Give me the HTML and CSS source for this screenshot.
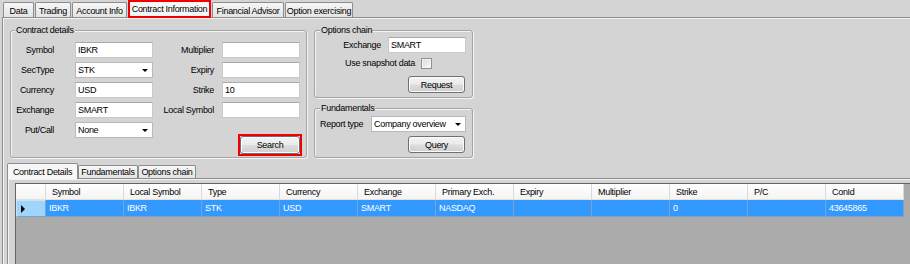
FILE: index.html
```html
<!DOCTYPE html>
<html>
<head>
<meta charset="utf-8">
<title>Contract Information</title>
<link rel="stylesheet" href="styles.css">
</head>
<body>
<div class="window">
  <div class="tabstrip">
    <div class="tab w-data">Data</div>
    <div class="tab w-trading">Trading</div>
    <div class="tab w-account">Account Info</div>
    <div class="tab active marked w-contract">Contract Information</div>
    <div class="tab w-fa">Financial Advisor</div>
    <div class="tab w-opt">Option exercising</div>
  </div>
  <div class="panel">
    <div class="top">
      <fieldset class="group details">
        <legend class="lg-details">Contract details</legend>
        <div class="form">
          <span class="lbl">Symbol</span><div class="input">IBKR</div>
          <span class="lbl lbl2">Multiplier</span><div class="input"></div>

          <span class="lbl">SecType</span><div class="input select">STK<span class="arrow"></span></div>
          <span class="lbl lbl2">Expiry</span><div class="input"></div>

          <span class="lbl">Currency</span><div class="input">USD</div>
          <span class="lbl lbl2">Strike</span><div class="input">10</div>

          <span class="lbl">Exchange</span><div class="input">SMART</div>
          <span class="lbl lbl2">Local Symbol</span><div class="input"></div>

          <span class="lbl">Put/Call</span><div class="input select">None<span class="arrow"></span></div>

          <div class="hilite"><div class="btn search">Search</div></div>
        </div>
      </fieldset>
      <div class="rightcol">
        <fieldset class="group side">
          <legend class="lg-side">Options chain</legend>
          <div class="row r-exch">
            <span class="rlbl">Exchange</span>
            <div class="input oc-input">SMART</div>
          </div>
          <div class="row r-snap">
            <span class="rlbl">Use snapshot data</span>
            <span class="checkbox"></span>
          </div>
          <div class="row r-btn">
            <div class="btn sbtn">Request</div>
          </div>
        </fieldset>
        <fieldset class="group side fund">
          <legend class="lg-side">Fundamentals</legend>
          <div class="row r-report">
            <span class="rlbl report-lbl">Report type</span>
            <div class="input select report-sel">Company overview<span class="arrow"></span></div>
          </div>
          <div class="row r-query">
            <div class="btn sbtn">Query</div>
          </div>
        </fieldset>
      </div>
    </div>

    <div class="lower">
      <div class="subtabs">
        <div class="subtab active w-cd">Contract Details</div>
        <div class="subtab w-fund">Fundamentals</div>
        <div class="subtab w-oc">Options chain</div>
      </div>
      <div class="subpanel">
        <div class="gridview">
          <div class="grow head">
            <div class="hcell corner"></div>
            <div class="hcell">Symbol</div>
            <div class="hcell">Local Symbol</div>
            <div class="hcell">Type</div>
            <div class="hcell">Currency</div>
            <div class="hcell">Exchange</div>
            <div class="hcell">Primary Exch.</div>
            <div class="hcell">Expiry</div>
            <div class="hcell">Multiplier</div>
            <div class="hcell">Strike</div>
            <div class="hcell">P/C</div>
            <div class="hcell">ConId</div>
          </div>
          <div class="grow data">
            <div class="rowhead"><span class="pointer"></span></div>
            <div class="dcell">IBKR</div>
            <div class="dcell">IBKR</div>
            <div class="dcell">STK</div>
            <div class="dcell">USD</div>
            <div class="dcell">SMART</div>
            <div class="dcell">NASDAQ</div>
            <div class="dcell"></div>
            <div class="dcell"></div>
            <div class="dcell">0</div>
            <div class="dcell"></div>
            <div class="dcell">43645865</div>
          </div>
        </div>
      </div>
    </div>
  </div>
</div>
</body>
</html>
```
FILE: styles.css
```css
* { box-sizing: border-box; }

html, body {
  margin: 0;
  padding: 0;
}

body {
  width: 910px;
  height: 264px;
  overflow: hidden;
  background: #d4d4d4;
  font-family: "Liberation Sans", Arial, sans-serif;
  font-size: 9px;
  letter-spacing: -0.3px;
  color: #000;
}

.window {
  width: 910px;
  height: 264px;
  overflow: hidden;
}

/* ---------- main tabs ---------- */
.tabstrip {
  display: flex;
  align-items: flex-end;
  height: 17px;
  padding-left: 3px;
  gap: 1px;
}

.tab {
  height: 15px;
  padding-top: 1px;
  border: 1px solid #8d8d8d;
  border-bottom: 0;
  border-radius: 2px 2px 0 0;
  background: linear-gradient(#f6f6f6, #e4e4e4);
  display: flex;
  align-items: center;
  justify-content: center;
  white-space: nowrap;
}

.tab.active {
  height: 18px;
  margin-bottom: -1px;
  padding-top: 0;
  background: #f7f7f7;
  position: relative;
  z-index: 1;
}

.tab.marked {
  border: 2px solid #f00000;
  border-radius: 0;
}

.w-data { width: 31px; }
.w-trading { width: 36px; }
.w-account { width: 55px; }
.w-contract { width: 83px; }
.w-fa { width: 72px; }
.w-opt { width: 68px; }

/* ---------- main panel ---------- */
.panel {
  margin-left: 2px;
  border-top: 1px solid #8d8d8d;
  border-left: 1px solid #8d8d8d;
  box-shadow: inset 1px 1px 0 #f2f2f2;
  padding: 6px 0 0 4px;
  height: 247px;
}

.top {
  display: flex;
  align-items: flex-start;
  gap: 7px;
  margin-left: 3px;
}

fieldset.group {
  margin: 0;
  padding: 0;
  min-width: 0;
  border: 1px solid #a4a4a4;
  border-radius: 3px;
  box-shadow: inset 1px 1px 0 #f4f4f4, 1px 1px 0 #f4f4f4;
}

fieldset.group legend {
  padding: 0 1px;
  height: 12px;
  line-height: 12px;
  background: #d4d4d4;
}

.lg-details { margin-left: 4px; }
.lg-side { margin-left: 5px; }

.details {
  width: 297px;
}

.form {
  display: grid;
  grid-template-columns: 64px 78px 69px 78px;
  grid-template-rows: repeat(5, 16px) 12px;
  row-gap: 4px;
  margin-top: 6px;
  padding-bottom: 3px;
}

.lbl {
  align-self: center;
  text-align: right;
  padding-right: 21px;
  line-height: 12px;
  white-space: nowrap;
}

.lbl.lbl2 {
  padding-right: 8px;
}

.input {
  height: 16px;
  background: #fff;
  border: 1px solid #c9c9c9;
  border-top-color: #a9a9a9;
  padding-left: 2px;
  line-height: 14px;
  display: flex;
  align-items: center;
  white-space: nowrap;
}

.select {
  border-color: #b9b9b9;
}

.arrow {
  margin-left: auto;
  margin-right: 4px;
  width: 0;
  height: 0;
  border-top: 3px solid #000;
  border-left: 3px solid transparent;
  border-right: 3px solid transparent;
}

.btn {
  border: 1px solid #707070;
  border-radius: 3px;
  background: linear-gradient(#f3f3f3 0%, #ebebeb 48%, #dddddd 52%, #cfcfcf 100%);
  box-shadow: inset 0 0 0 1px #fbfbfb;
  display: flex;
  align-items: center;
  justify-content: center;
  white-space: nowrap;
}

.hilite {
  grid-column: 4;
  grid-row: 6;
  justify-self: end;
  align-self: start;
  border: 2px solid #f00000;
  margin-top: -8px;
  margin-right: -2px;
}

.search {
  width: 60px;
  height: 18px;
}

/* ---------- right column ---------- */
.rightcol {
  display: flex;
  flex-direction: column;
  gap: 4px;
  width: 159px;
}

.side {
  width: 159px;
  padding: 0 6px 4px 0 !important;
}

.row {
  display: flex;
  align-items: center;
  justify-content: flex-end;
}

.rlbl {
  white-space: nowrap;
  line-height: 12px;
}

.r-exch {
  margin-top: 1px;
  height: 16px;
  gap: 7px;
}

.oc-input {
  width: 78px;
}

.r-snap {
  margin-top: 4px;
  height: 12px;
  gap: 6px;
  margin-right: 34px;
}

.checkbox {
  width: 11px;
  height: 11px;
  border: 1px solid #8f8f8f;
  background: linear-gradient(135deg, #d9d9d9, #fbfbfb);
  box-shadow: inset 0 0 0 1px #f4f4f4;
}

.r-btn {
  margin-top: 7px;
}

.sbtn {
  width: 57px;
  height: 17px;
  margin-right: 1px;
}

.r-report {
  margin-top: 2px;
  height: 16px;
}

.report-lbl {
  margin-left: 5px;
  margin-right: auto;
}

.report-sel {
  width: 95px;
}

.r-query {
  margin-top: 4px;
}

/* ---------- lower tab control ---------- */
.lower {
  margin-top: 5px;
}

.subtabs {
  display: flex;
  align-items: flex-end;
  height: 15px;
}

.subtab {
  height: 13px;
  border: 1px solid #8d8d8d;
  border-bottom: 0;
  border-radius: 2px 2px 0 0;
  background: linear-gradient(#f6f6f6, #e4e4e4);
  display: flex;
  align-items: center;
  justify-content: center;
  white-space: nowrap;
}

.subtab.active {
  height: 16px;
  margin-bottom: -1px;
  background: #f7f7f7;
  position: relative;
  z-index: 1;
}

.w-cd { width: 71px; }
.w-fund { width: 60px; }
.w-oc { width: 58px; }

.subpanel {
  border-top: 1px solid #8d8d8d;
  border-left: 1px solid #8d8d8d;
  box-shadow: inset 1px 1px 0 #f2f2f2;
  padding: 4px 0 0 7px;
  height: 90px;
}

.gridview {
  height: 90px;
  background: #ababab;
  border-top: 1px solid #646464;
  border-left: 1px solid #646464;
  overflow: hidden;
}

.grow {
  display: grid;
  grid-template-columns: 30px repeat(11, 78px);
}

.hcell {
  height: 16px;
  background: linear-gradient(#ffffff, #f4f4f4);
  border-right: 1px solid #dadada;
  border-bottom: 1px solid #e6dfd2;
  padding-left: 6px;
  line-height: 16px;
  white-space: nowrap;
}

.dcell {
  height: 17px;
  background: #3399ff;
  color: #fff;
  border-right: 1px solid #7aa3cf;
  border-bottom: 1px solid #7aa3cf;
  padding-left: 3px;
  line-height: 17px;
  white-space: nowrap;
}

.rowhead {
  height: 17px;
  background: #9fd4fb;
  border: 1px solid #c4e4fb;
  border-right-color: #7aa3cf;
  border-bottom-color: #7aa3cf;
  display: flex;
  align-items: center;
  padding-left: 4px;
}

.pointer {
  width: 0;
  height: 0;
  border-left: 4px solid #000;
  border-top: 4px solid transparent;
  border-bottom: 4px solid transparent;
}
```
